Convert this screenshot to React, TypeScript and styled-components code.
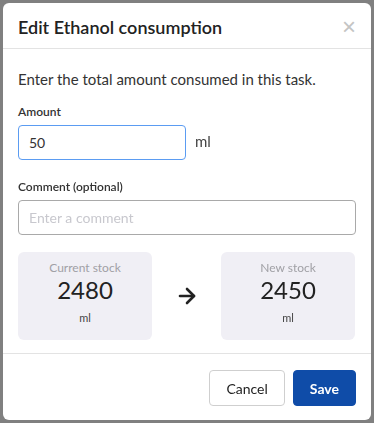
import React, { useState } from 'react';
import styled, { createGlobalStyle } from 'styled-components';
import { ArrowRight } from 'lucide-react';

const GlobalStyle = createGlobalStyle`
    html, body {
        margin: 0;
        padding: 0;
        background: #808080;
    }
    body {
        font-family: Lato, "Open Sans", sans-serif;
        color: #333;
    }
    * {
        box-sizing: border-box;
    }
`;

const App = () => {
    const [amount, setAmount] = useState('50');
    const [comment, setComment] = useState('');
    const currentStock = 2480;
    const alreadyConsumed = 20;
    const newStock = currentStock + alreadyConsumed - (Number(amount) || 0);

    return (
        <>
            <GlobalStyle />
            <Overlay>
                <Modal>
                    <Header>
                        <Title>Edit Ethanol consumption</Title>
                        <CloseButton aria-label="Close">×</CloseButton>
                    </Header>
                    <Body>
                        <Intro>Enter the total amount consumed in this task.</Intro>
                        <Field>
                            <Label>Amount</Label>
                            <AmountRow>
                                <Input
                                    autoFocus
                                    $focused
                                    $width={168}
                                    value={amount}
                                    onChange={(e) => setAmount(e.target.value)}
                                />
                                <Unit>ml</Unit>
                            </AmountRow>
                        </Field>
                        <Field>
                            <Label>Comment (optional)</Label>
                            <Input
                                placeholder="Enter a comment"
                                value={comment}
                                onChange={(e) => setComment(e.target.value)}
                            />
                        </Field>
                        <StockRow>
                            <StockCard>
                                <StockLabel>Current stock</StockLabel>
                                <StockValue>{currentStock}</StockValue>
                                <StockUnit>ml</StockUnit>
                            </StockCard>
                            <ArrowRight size={24} strokeWidth={2.6} color="#222" />
                            <StockCard>
                                <StockLabel>New stock</StockLabel>
                                <StockValue>{newStock}</StockValue>
                                <StockUnit>ml</StockUnit>
                            </StockCard>
                        </StockRow>
                    </Body>
                    <Footer>
                        <Button>Cancel</Button>
                        <Button $primary>Save</Button>
                    </Footer>
                </Modal>
            </Overlay>
        </>
    );
};

export default App;

const Overlay = styled.div`
    padding: 3px;
    height: 423px;
`;

const Modal = styled.div`
    width: 368px;
    height: 417px;
    background: #fff;
    border-radius: 6px;
    display: flex;
    flex-direction: column;
`;

const Header = styled.div`
    display: flex;
    align-items: center;
    justify-content: space-between;
    height: 46px;
    padding: 2px 15px 0 15px;
    border-bottom: 1px solid #e3e3e3;
`;

const Title = styled.h2`
    margin: 0;
    font-size: 18px;
    font-weight: 600;
    color: #222;
`;

const CloseButton = styled.button`
    border: none;
    background: none;
    padding: 0;
    font-family: Arial, sans-serif;
    font-size: 24px;
    line-height: 1;
    color: #c4c4c4;
    cursor: pointer;
`;

const Body = styled.div`
    flex: 1;
    padding: 21px 15px 0 15px;
    display: flex;
    flex-direction: column;
`;

const Intro = styled.p`
    margin: 0 0 16px 0;
    font-size: 15px;
    color: #333;
`;

const Field = styled.div`
    display: flex;
    flex-direction: column;
    margin-bottom: 19px;
`;

const Label = styled.label`
    font-size: 12px;
    font-weight: 600;
    color: #333;
    margin-bottom: 6px;
`;

const AmountRow = styled.div`
    display: flex;
    align-items: center;
    gap: 9px;
`;

const Input = styled.input<{ $focused?: boolean; $width?: number }>`
    width: ${(p) => (p.$width ? `${p.$width}px` : '100%')};
    height: 35px;
    padding: 0 10px;
    font-family: Lato, sans-serif;
    font-size: 14px;
    color: #333;
    border: 1px solid ${(p) => (p.$focused ? '#5b9cf2' : '#a9a9a9')};
    border-radius: 4px;
    outline: none;
    caret-color: #111;

    &::placeholder {
        color: #c8c8ce;
    }
`;

const Unit = styled.span`
    font-size: 15px;
    color: #444;
    margin-top: -4px;
`;

const StockRow = styled.div`
    display: flex;
    align-items: center;
    justify-content: space-between;
    margin-top: -2px;
    padding-right: 1px;
`;

const StockCard = styled.div`
    width: 134px;
    height: 88px;
    background: #f0eff5;
    border-radius: 6px;
    display: flex;
    flex-direction: column;
    align-items: center;
    padding-top: 8px;
`;

const StockLabel = styled.div`
    font-size: 12px;
    color: #a0a0a5;
`;

const StockValue = styled.div`
    font-size: 24px;
    color: #222;
    margin-top: 1px;
    line-height: 1.2;
`;

const StockUnit = styled.div`
    font-size: 11px;
    color: #444;
    margin-top: 6px;
`;

const Footer = styled.div`
    display: flex;
    justify-content: flex-end;
    gap: 8px;
    padding: 16px 15px 14px 15px;
    border-top: 1px solid #e3e3e3;
`;

const Button = styled.button<{ $primary?: boolean }>`
    height: 36px;
    padding: 0 16px;
    font-family: Lato, sans-serif;
    font-size: 14px;
    font-weight: ${(p) => (p.$primary ? 700 : 400)};
    color: ${(p) => (p.$primary ? '#fff' : '#222')};
    background: ${(p) => (p.$primary ? '#0f4ca8' : '#fff')};
    border: 1px solid ${(p) => (p.$primary ? '#0f4ca8' : '#cfcfcf')};
    border-radius: 4px;
    cursor: pointer;
`;
